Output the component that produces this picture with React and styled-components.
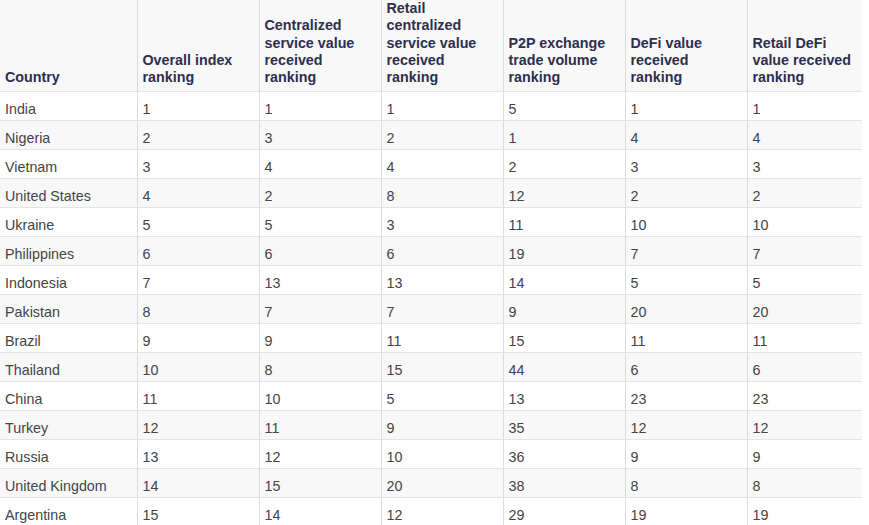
import React from 'react'
import styled, { createGlobalStyle } from "styled-components"

const GlobalStyle = createGlobalStyle`
  html, body {
    margin: 0;
    padding: 0;
    background: #ffffff;
  }
  body {
    font-family: "Liberation Sans", Arial, sans-serif;
    overflow: hidden;
  }
`;

const Table = styled.table`
  width: 862px;
  table-layout: fixed;
  border-collapse: collapse;
  font-size: 14.3px;
`;

const Head = styled.th`
  background: #f8f8f8;
  color: #2e2e4f;
  font-weight: 700;
  text-align: left;
  vertical-align: bottom;
  line-height: 17.25px;
  padding: 0 5px 5px 5px;
  border-bottom: 1px solid #e4e4e4;
  border-left: ${({ $first }) => ($first ? "none" : "1px solid #dcdcdc")};
`;

const Row = styled.tr`
  background: ${({ $shade }) => ($shade ? "#f8f8f8" : "#ffffff")};
`;

const Cell = styled.td`
  color: #444444;
  line-height: 16px;
  padding: 9px 5px 3px 5px;
  border-bottom: 1px solid #e4e4e4;
  border-left: ${({ $first }) => ($first ? "none" : "1px solid #dcdcdc")};
  white-space: nowrap;
`;

const columns = [
  { title: "Country", width: 137 },
  { title: "Overall index ranking", width: 122 },
  { title: "Centralized service value received ranking", width: 122 },
  { title: "Retail centralized service value received ranking", width: 122 },
  { title: "P2P exchange trade volume ranking", width: 122 },
  { title: "DeFi value received ranking", width: 122 },
  { title: "Retail DeFi value received ranking", width: 115 },
];

const rows = [
  ["India", 1, 1, 1, 5, 1, 1],
  ["Nigeria", 2, 3, 2, 1, 4, 4],
  ["Vietnam", 3, 4, 4, 2, 3, 3],
  ["United States", 4, 2, 8, 12, 2, 2],
  ["Ukraine", 5, 5, 3, 11, 10, 10],
  ["Philippines", 6, 6, 6, 19, 7, 7],
  ["Indonesia", 7, 13, 13, 14, 5, 5],
  ["Pakistan", 8, 7, 7, 9, 20, 20],
  ["Brazil", 9, 9, 11, 15, 11, 11],
  ["Thailand", 10, 8, 15, 44, 6, 6],
  ["China", 11, 10, 5, 13, 23, 23],
  ["Turkey", 12, 11, 9, 35, 12, 12],
  ["Russia", 13, 12, 10, 36, 9, 9],
  ["United Kingdom", 14, 15, 20, 38, 8, 8],
  ["Argentina", 15, 14, 12, 29, 19, 19],
];

const App = () => {
  return (
    <>
      <GlobalStyle />
      <Table>
        <colgroup>
          {columns.map((c) => (
            <col key={c.title} style={{ width: c.width }} />
          ))}
        </colgroup>
        <thead>
          <tr>
            {columns.map((c, i) => (
              <Head key={c.title} $first={i === 0}>{c.title}</Head>
            ))}
          </tr>
        </thead>
        <tbody>
          {rows.map((r, ri) => (
            <Row key={r[0]} $shade={ri % 2 === 1}>
              {r.map((v, ci) => (
                <Cell key={ci} $first={ci === 0}>{v}</Cell>
              ))}
            </Row>
          ))}
        </tbody>
      </Table>
    </>
  )
}

export default App
